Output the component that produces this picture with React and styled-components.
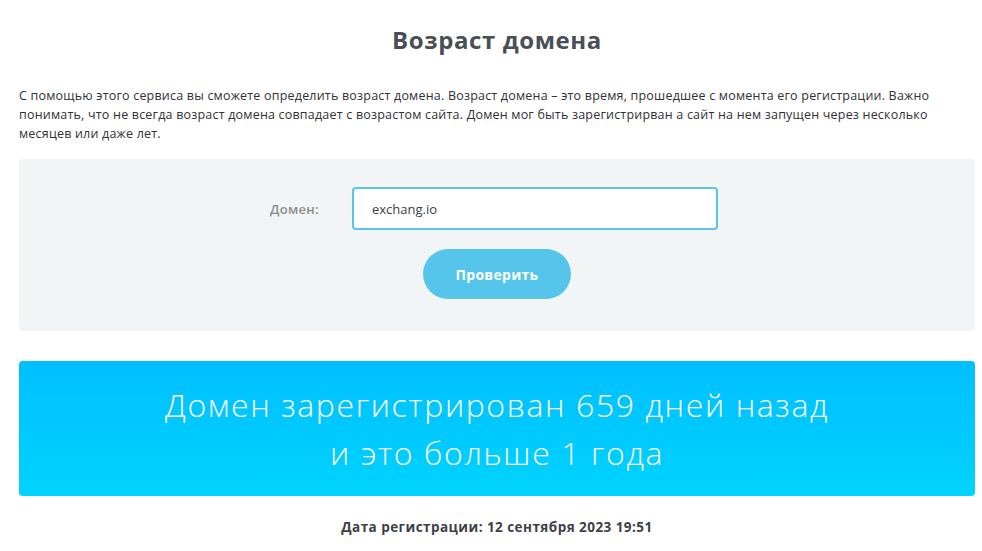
import React from "react";
import styled, { createGlobalStyle } from "styled-components";

const Global = createGlobalStyle`
  html, body { margin: 0; padding: 0; background: #ffffff; }
  body { font-family: "Open Sans", "DejaVu Sans", sans-serif; color: #333; }
  * { box-sizing: border-box; }
`;

const Page = styled.main`
  width: 982px;
  padding: 0 7px 0 19px;
  display: flex;
  flex-direction: column;
`;

const Title = styled.h1`
  margin: 24px 0 0;
  height: 32px;
  text-align: center;
  font-family: "Open Sans", sans-serif;
  font-weight: 700;
  font-size: 24px;
  line-height: 32px;
  letter-spacing: 0.6px;
  color: #4a4f56;
`;

const Intro = styled.p`
  margin: 30px 0 0;
  font-family: "Open Sans", sans-serif;
  font-size: 12.5px;
  line-height: 19px;
  letter-spacing: 0.2px;
  color: #2f3135;
`;

const FormCard = styled.section`
  margin-top: 16px;
  height: 172px;
  background: #f2f5f6;
  border-radius: 4px;
  display: flex;
  flex-direction: column;
  align-items: center;
  padding-top: 28px;
`;

const FieldRow = styled.div`
  display: grid;
  grid-template-columns: 82px 366px;
  align-items: center;
  margin-right: 6px;
`;

const Label = styled.label`
  font-family: "Open Sans", sans-serif;
  font-weight: 600;
  font-size: 13px;
  letter-spacing: 0.3px;
  color: #8c8c8c;
`;

const Input = styled.input`
  height: 43px;
  width: 366px;
  border: 2px solid #5bc4ea;
  border-radius: 4px;
  background: #fff;
  padding: 0 18px;
  font-family: "Open Sans", sans-serif;
  font-size: 13px;
  color: #3a3f45;
  outline: none;
`;

const Button = styled.button`
  margin-top: 19px;
  width: 148px;
  height: 50px;
  border: none;
  border-radius: 25px;
  background: #56c5ec;
  color: #fff;
  font-family: "Open Sans", sans-serif;
  font-weight: 700;
  font-size: 14px;
  letter-spacing: 0.3px;
  cursor: pointer;
`;

const Result = styled.section`
  margin-top: 30px;
  height: 135px;
  border-radius: 4px;
  background: linear-gradient(180deg, #00bfff 0%, #00d3fe 100%);
  display: flex;
  flex-direction: column;
  align-items: center;
  justify-content: center;
  color: #fff;
  font-family: "Open Sans", sans-serif;
  font-weight: 300;
  font-size: 32px;
  line-height: 48px;
  letter-spacing: 1.6px;
`;

const ResultLine = styled.div`
  white-space: nowrap;
`;

const RegDate = styled.p`
  margin: 21px 0 0;
  text-align: center;
  font-family: "Open Sans", sans-serif;
  font-weight: 700;
  font-size: 13.5px;
  line-height: 20px;
  letter-spacing: 0.45px;
  color: #3d4146;
`;

export default function App() {
  return (
    <>
      <Global />
      <Page>
        <Title>Возраст домена</Title>
        <Intro>
          С помощью этого сервиса вы сможете определить возраст домена. Возраст домена – это время, прошедшее с момента его регистрации. Важно
          <br />
          понимать, что не всегда возраст домена совпадает с возрастом сайта. Домен мог быть зарегистрирван а сайт на нем запущен через несколько
          <br />
          месяцев или даже лет.
        </Intro>
        <FormCard>
          <FieldRow>
            <Label htmlFor="domain">Домен:</Label>
            <Input id="domain" defaultValue="exchang.io" spellCheck={false} />
          </FieldRow>
          <Button type="button">Проверить</Button>
        </FormCard>
        <Result>
          <ResultLine>Домен зарегистрирован 659 дней назад</ResultLine>
          <ResultLine>и это больше 1 года</ResultLine>
        </Result>
        <RegDate>Дата регистрации: 12 сентября 2023 19:51</RegDate>
      </Page>
    </>
  );
}
